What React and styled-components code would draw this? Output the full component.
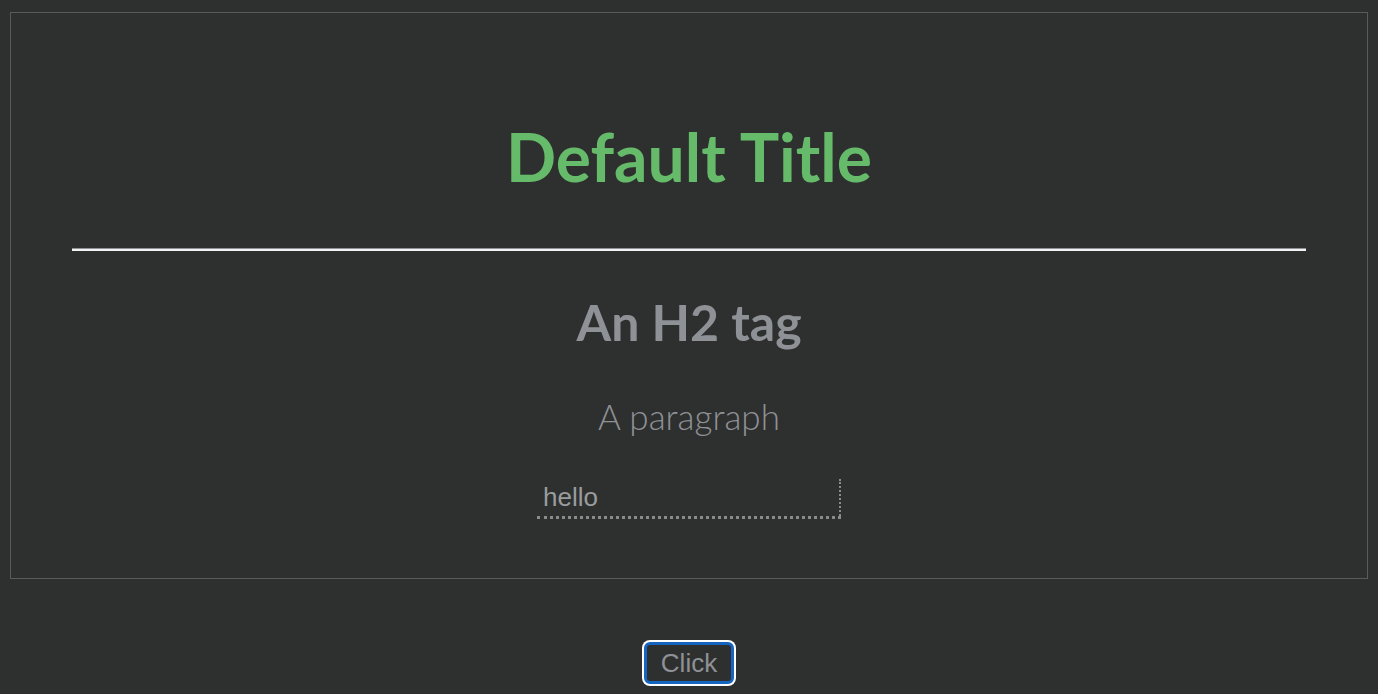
import React from 'react';
import styled, { createGlobalStyle } from 'styled-components';

const GlobalStyle = createGlobalStyle`
  html, body {
    margin: 0;
    padding: 0;
    background: #2e302f;
  }
  body {
    font-family: Lato, "Noto Sans", sans-serif;
  }
`;

const Page = styled.div`
  min-height: 694px;
  padding: 12px 10px 0 10px;
  box-sizing: border-box;
  display: flex;
  flex-direction: column;
  align-items: center;
`;

const Card = styled.section`
  align-self: stretch;
  border: 1px solid #585b5a;
  padding: 104px 61px 59px 61px;
  display: flex;
  flex-direction: column;
  align-items: center;
`;

const Title = styled.h1`
  margin: 0;
  font-family: Lato, sans-serif;
  font-size: 66px;
  font-weight: 700;
  line-height: 1.2;
  color: #66bb6a;
`;

const Rule = styled.hr`
  align-self: stretch;
  margin: 52px 0 0 0;
  border: 0;
  border-top: 1px solid #8e9196;
  border-bottom: 2px solid #f2f2f2;
  height: 0;
`;

const Subtitle = styled.h2`
  margin: 41px 0 0 0;
  font-family: Lato, sans-serif;
  font-size: 50px;
  font-weight: 700;
  line-height: 1.2;
  color: #8e9196;
`;

const Paragraph = styled.p`
  margin: 43px 0 0 0;
  font-family: Lato, sans-serif;
  font-size: 35px;
  font-weight: 300;
  line-height: 1.2;
  color: #8e9196;
`;

const TextInput = styled.input`
  margin-top: 42px;
  width: 304px;
  height: 40px;
  box-sizing: border-box;
  padding: 0 6px;
  background: transparent;
  border: 0;
  border-right: 2px dotted #8a8c8b;
  border-bottom: 3px dotted #8a8c8b;
  font-family: "Liberation Sans", Arial, sans-serif;
  font-size: 26px;
  color: #9a9c9e;
  outline: none;
`;

const Button = styled.button`
  margin-top: 63px;
  width: 90px;
  height: 42px;
  box-sizing: border-box;
  background: #2e302f;
  border: 3px solid #1565c0;
  border-radius: 6px;
  box-shadow: 0 0 0 2px #ffffff;
  font-family: "Liberation Sans", Arial, sans-serif;
  font-size: 26px;
  color: #8e9196;
  padding: 0;
  cursor: pointer;
`;

export default function App() {
  return (
    <>
      <GlobalStyle />
      <Page>
        <Card>
          <Title>Default Title</Title>
          <Rule />
          <Subtitle>An H2 tag</Subtitle>
          <Paragraph>A paragraph</Paragraph>
          <TextInput defaultValue="hello" />
        </Card>
        <Button>Click</Button>
      </Page>
    </>
  );
}
